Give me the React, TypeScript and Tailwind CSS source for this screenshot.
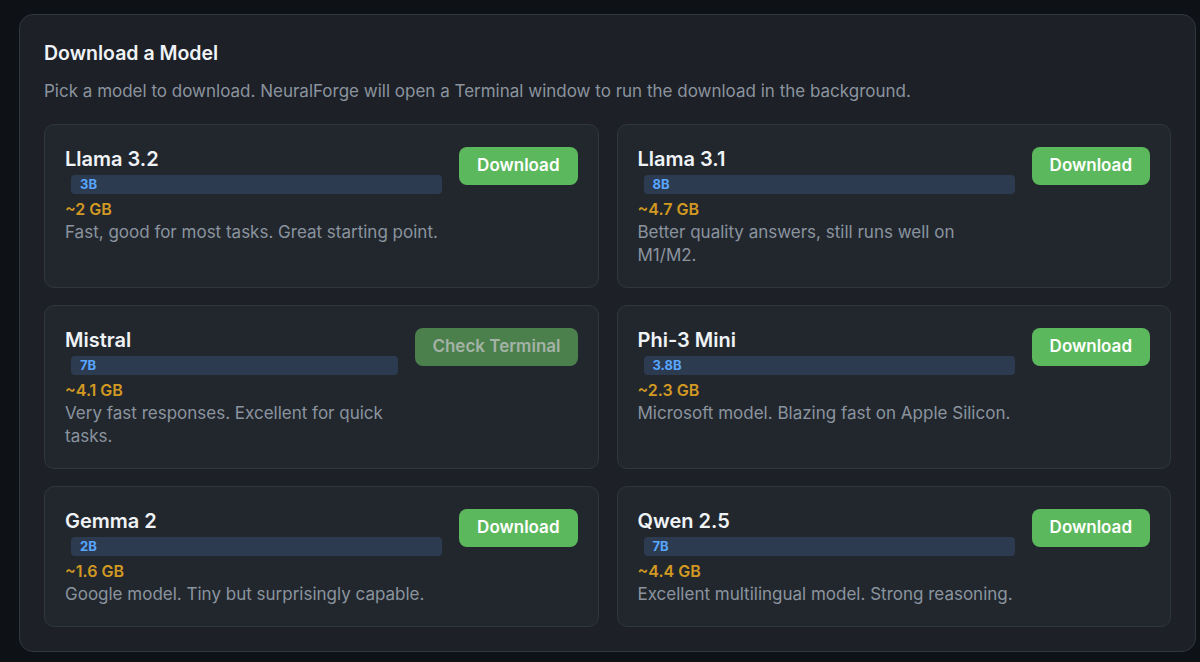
import React from 'react'

// ─────────────────────────────────────────────
// Data
// ─────────────────────────────────────────────

type Model = {
  name:   string
  params: string
  size:   string
  desc:   string
  status: 'idle' | 'pending'
}

const models: Model[] = [
  { name: 'Llama 3.2',  params: '3B',   size: '~2 GB',   desc: 'Fast, good for most tasks. Great starting point.',     status: 'idle' },
  { name: 'Llama 3.1',  params: '8B',   size: '~4.7 GB', desc: 'Better quality answers, still runs well on M1/M2.',    status: 'idle' },
  { name: 'Mistral',    params: '7B',   size: '~4.1 GB', desc: 'Very fast responses. Excellent for quick tasks.',      status: 'pending' },
  { name: 'Phi-3 Mini', params: '3.8B', size: '~2.3 GB', desc: 'Microsoft model. Blazing fast on Apple Silicon.',      status: 'idle' },
  { name: 'Gemma 2',    params: '2B',   size: '~1.6 GB', desc: 'Google model. Tiny but surprisingly capable.',         status: 'idle' },
  { name: 'Qwen 2.5',   params: '7B',   size: '~4.4 GB', desc: 'Excellent multilingual model. Strong reasoning.',      status: 'idle' },
]

// ─────────────────────────────────────────────
// Card
// ─────────────────────────────────────────────

function ModelCard({ model }: { model: Model }) {
  const pending = model.status === 'pending'
  return (
    <div className="flex items-start gap-[17px] rounded-[10px] border border-[#30363d] bg-[#22272e] p-5">
      <div className="min-w-0 flex-1">
        <div className="text-[20px] font-semibold leading-7 text-[#f0f3f6]">{model.name}</div>
        <span className="ml-1.5 mt-0.5 block rounded-[4px] bg-[#2d3b50] px-[9px] text-[13px] font-bold leading-[19px] text-[#58a6ff]">
          {model.params}
        </span>
        <div className="mt-[5px] text-[16px] font-semibold leading-5 text-[#d29922]">{model.size}</div>
        <p className="mt-0.5 text-[17px] leading-[23px] text-[#8b949e]">{model.desc}</p>
      </div>
      {pending ? (
        <button className="mt-[2px] h-[38px] shrink-0 rounded-lg bg-[#4b804d] px-[17px] text-[17px] font-semibold text-[#a4b3a5]">
          Check Terminal
        </button>
      ) : (
        <button className="mt-[2px] h-[38px] shrink-0 rounded-lg bg-[#5cb85c] px-[18px] text-[17px] font-semibold text-white">
          Download
        </button>
      )}
    </div>
  )
}

// ─────────────────────────────────────────────
// Main
// ─────────────────────────────────────────────

export default function App() {
  return (
    <div
      className="min-h-[662px] bg-[#0e1116] pb-[10px] pl-[19px] pr-1 pt-[14px]"
      style={{ fontFamily: 'Inter, "Noto Sans", sans-serif' }}
    >
      <div className="rounded-[14px] border border-[#30363d] bg-[#1d2027] px-6 pb-6 pt-6">
        <h2 className="text-[19.5px] font-semibold leading-7 text-[#f0f3f6]">Download a Model</h2>
        <p className="mt-3 text-[17px] leading-6 text-[#8b949e]">
          Pick a model to download. NeuralForge will open a Terminal window to run the download in the background.
        </p>

        <div className="mt-[21px] grid grid-cols-2 gap-x-[18px] gap-y-[17px]">
          {models.map(m => (
            <ModelCard key={m.name} model={m} />
          ))}
        </div>
      </div>
    </div>
  )
}
